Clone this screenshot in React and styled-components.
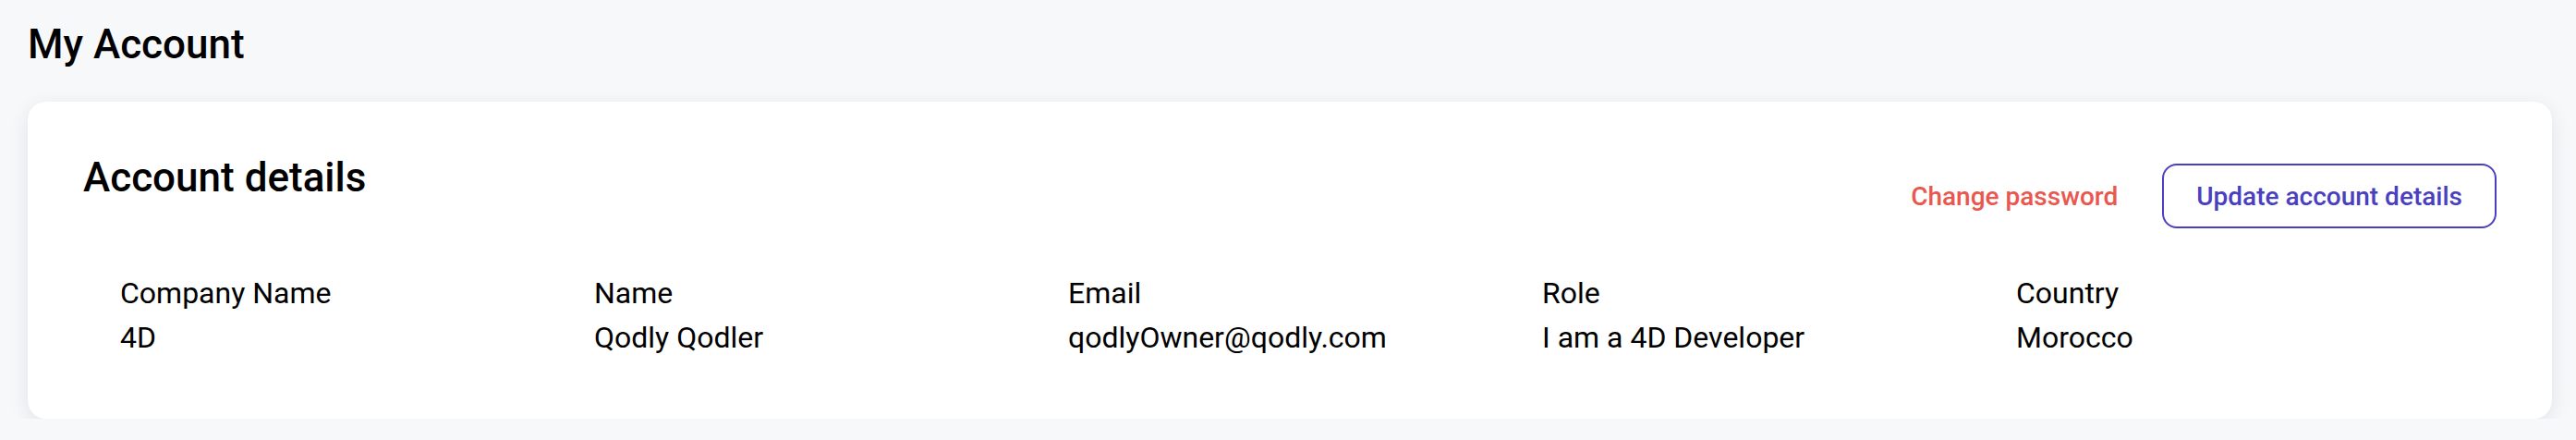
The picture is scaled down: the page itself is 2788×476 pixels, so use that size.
import React from 'react';
import styled, {createGlobalStyle} from 'styled-components';

const GlobalStyle = createGlobalStyle`
  html, body {
    margin: 0;
    padding: 0;
    background: #f7f8fa;
  }
  body {
    font-family: Roboto, "Liberation Sans", Arial, sans-serif;
    color: #000;
  }
`;

const Page = styled.div`
  padding: 22px 26px 0 30px;
`;

const PageTitle = styled.h1`
  margin: 0 0 36px 0;
  font-size: 44px;
  font-weight: 500;
  line-height: 52px;
`;

const Card = styled.section`
  background: #fff;
  border-radius: 20px;
  box-shadow: 0 6px 22px rgba(20, 24, 40, 0.09);
  padding: 56px 60px 64px 60px;
`;

const CardHeader = styled.div`
  display: flex;
  justify-content: space-between;
  align-items: flex-start;
`;

const CardTitle = styled.h2`
  margin: 0;
  font-size: 44px;
  font-weight: 500;
  line-height: 52px;
`;

const Actions = styled.div`
  display: flex;
  align-items: center;
  gap: 48px;
  margin-top: 11px;
`;

const LinkButton = styled.button`
  background: none;
  border: none;
  padding: 0;
  font-family: inherit;
  font-size: 28px;
  font-weight: 500;
  color: #e9574f;
  cursor: pointer;
`;

const OutlineButton = styled.button`
  background: #fff;
  border: 2px solid #4a3fc0;
  border-radius: 16px;
  padding: 16px 35px;
  height: 70px;
  font-family: inherit;
  font-size: 28px;
  font-weight: 500;
  color: #4a3fc0;
  cursor: pointer;
`;

const Details = styled.div`
  display: grid;
  grid-template-columns: repeat(5, 513px);
  padding-left: 40px;
  margin-top: 46px;
`;

const Field = styled.div`
  display: flex;
  flex-direction: column;
  font-size: 32px;
  line-height: 48px;
`;

const fields = [
    {label: 'Company Name', value: '4D'},
    {label: 'Name', value: 'Qodly Qodler'},
    {label: 'Email', value: 'qodlyOwner@qodly.com'},
    {label: 'Role', value: 'I am a 4D Developer'},
    {label: 'Country', value: 'Morocco'},
];

const App = () => {
    return (
        <Page>
            <GlobalStyle/>
            <PageTitle>My Account</PageTitle>
            <Card>
                <CardHeader>
                    <CardTitle>Account details</CardTitle>
                    <Actions>
                        <LinkButton>Change password</LinkButton>
                        <OutlineButton>Update account details</OutlineButton>
                    </Actions>
                </CardHeader>
                <Details>
                    {fields.map((f) => (
                        <Field key={f.label}>
                            <span>{f.label}</span>
                            <span>{f.value}</span>
                        </Field>
                    ))}
                </Details>
            </Card>
        </Page>
    );
};

export default App;
